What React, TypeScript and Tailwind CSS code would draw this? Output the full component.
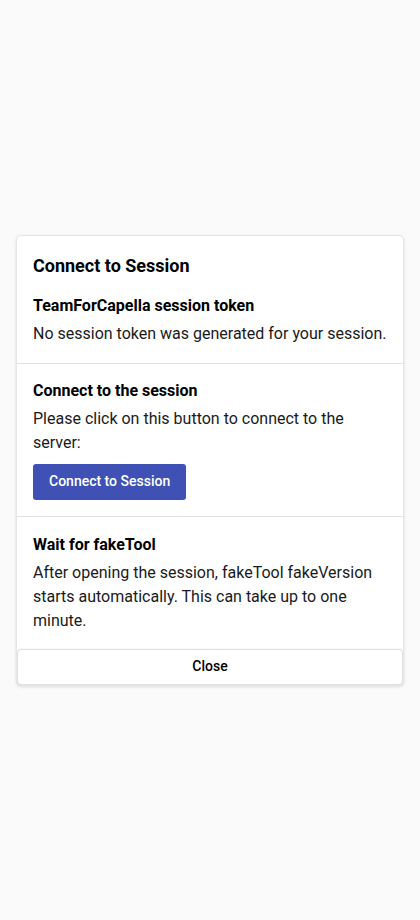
import React from "react";

export default function App() {
  return (
    <div
      className="min-h-screen w-full bg-[#fafafa] flex items-center justify-center px-4"
      style={{ fontFamily: "Roboto, 'Liberation Sans', sans-serif" }}
    >
      <div className="w-[388px] bg-white border border-[#e6e6e6] rounded-[5px] shadow-[0_1px_3px_rgba(0,0,0,0.12)] overflow-hidden">
        <div className="px-4 pt-4">
          <h2 className="text-[18px] leading-7 font-bold text-black">Connect to Session</h2>
        </div>
        <div className="px-4 pt-3.5 pb-[17px] border-b border-[#e0e0e0]">
          <h3 className="text-[16px] leading-6 font-bold text-black">TeamForCapella session token</h3>
          <p className="mt-1 text-[16px] leading-6 text-[#1a1a1a]">
            No session token was generated for your session.
          </p>
        </div>
        <div className="px-4 pt-[15px] pb-4 border-b border-[#e0e0e0]">
          <h3 className="text-[16px] leading-6 font-bold text-black">Connect to the session</h3>
          <p className="mt-1 text-[16px] leading-6 text-[#1a1a1a]">
            Please click on this button to connect to the server:
          </p>
          <button className="mt-[9px] h-9 px-4 rounded-[3px] bg-[#3f51b5] text-white text-[14px] font-medium">
            Connect to Session
          </button>
        </div>
        <div className="px-4 pt-4 pb-4">
          <h3 className="text-[16px] leading-6 font-bold text-black">Wait for fakeTool</h3>
          <p className="mt-1 text-[16px] leading-6 text-[#1a1a1a]">
            After opening the session, fakeTool fakeVersion starts automatically. This can take up to one minute.
          </p>
        </div>
        <button className="w-full h-9 bg-white border border-[#e0e0e0] rounded-[4px] shadow-[0_1px_3px_rgba(0,0,0,0.2)] text-[14px] font-medium text-black">
          Close
        </button>
      </div>
    </div>
  );
}
